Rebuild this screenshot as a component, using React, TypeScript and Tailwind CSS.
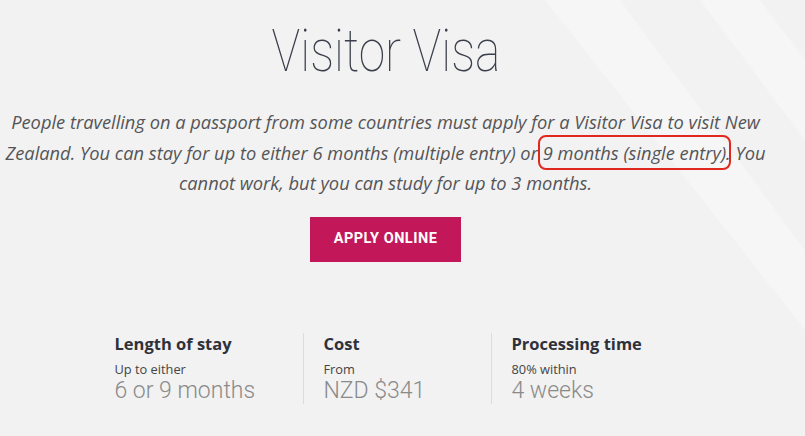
export default function App() {
  return (
    <div className="relative w-[805px] h-[436px] overflow-hidden bg-[#f2f2f2]">
      <svg className="absolute inset-0 pointer-events-none" width="805" height="436" viewBox="0 0 805 436">
        <polygon points="545,0 620,0 805,250 805,330" fill="#ffffff" opacity="0.3" />
        <polygon points="700,0 760,0 805,60 805,140" fill="#ffffff" opacity="0.35" />
      </svg>

      <div className="relative flex flex-col items-center pr-[34px]">
        <h1 className="mt-[18px] text-[60px] leading-[66px] text-[#3b3f4b] font-thin scale-x-[0.8] font-['Roboto',sans-serif]">
          Visitor Visa
        </h1>

        <p className="mt-[23px] text-center italic text-[18.3px] leading-[30.5px] text-[#555557] font-['Open_Sans',sans-serif]">
          People travelling on a passport from some countries must apply for a Visitor Visa to visit New
          <br />
          Zealand. You can stay for up to either 6 months (multiple entry) or{" "}
          <span className="rounded-[3px] outline-[2.5px] outline-offset-[3px] outline-[#e0281e]">9 months (single entry)</span>. You
          <br />
          cannot work, but you can study for up to 3 months.
        </p>

        <button className="mt-[18px] w-[151px] h-[45px] bg-[#c2185a] text-white text-[14.5px] font-bold tracking-[0.5px] font-['Roboto',sans-serif]">
          APPLY ONLINE
        </button>

        <div className="mt-[71px] ml-[34px] w-[576px] grid grid-cols-[188px_188px_1fr]">
          <Stat title="Length of stay" sub="Up to either" value="6 or 9 months" />
          <Stat title="Cost" sub="From" value="NZD $341" divider />
          <Stat title="Processing time" sub="80% within" value="4 weeks" divider />
        </div>
      </div>
    </div>
  );
}

function Stat({ title, sub, value, divider }: { title: string; sub: string; value: string; divider?: boolean }) {
  return (
    <div className={divider ? "border-l border-[#dcdcdc] pb-[0px] pl-[20px]" : "pb-[0px]"}>
      <div className="text-[16.5px] leading-[22px] font-bold text-[#2f313a] font-['Open_Sans',sans-serif]">{title}</div>
      <div className="mt-[6px] text-[12.8px] leading-[16px] text-[#444] font-['Open_Sans',sans-serif]">{sub}</div>
      <div className="text-[23px] leading-[27px] font-light text-[#8a8a8a] font-['Roboto',sans-serif]">{value}</div>
    </div>
  );
}
